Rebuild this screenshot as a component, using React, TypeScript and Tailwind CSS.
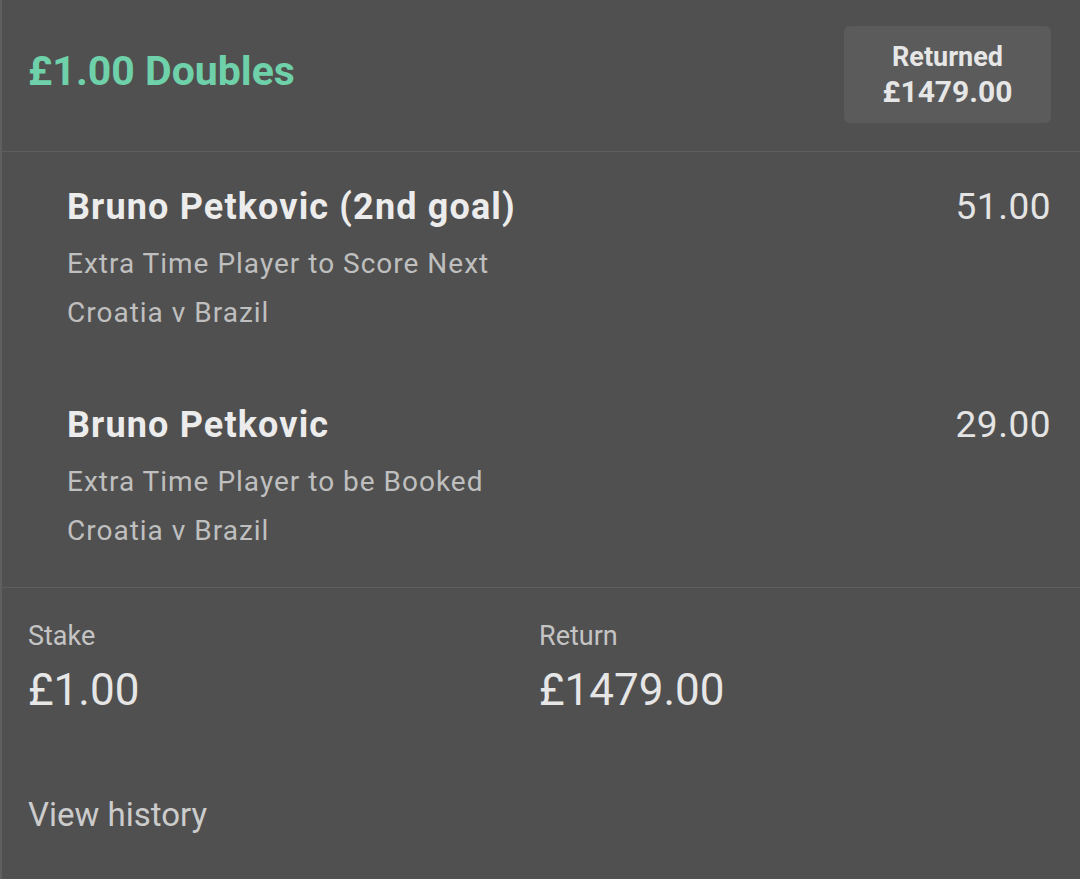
const selections = [
  {
    name: "Bruno Petkovic (2nd goal)",
    market: "Extra Time Player to Score Next",
    event: "Croatia v Brazil",
    odds: "51.00",
  },
  {
    name: "Bruno Petkovic",
    market: "Extra Time Player to be Booked",
    event: "Croatia v Brazil",
    odds: "29.00",
  },
];

export default function App() {
  return (
    <div
      className="min-h-[879px] w-[1080px] bg-[#505050] border-l-2 border-[#5f5f5f]"
      style={{ fontFamily: "Roboto, 'Noto Sans', sans-serif" }}
    >
      {/* Header */}
      <div className="flex h-[152px] items-start justify-between border-b border-[#5e5e5e] pl-[26px] pr-[29px] pt-[26px]">
        <h1 className="mt-[25px] text-[41px] font-bold leading-none text-[#6fd1a9]">£1.00 Doubles</h1>
        <div className="flex h-[97px] w-[207px] flex-col items-center justify-center rounded-md bg-[#5b5b5b] text-[#e6e6e6]">
          <span className="text-[27px] font-bold leading-[34px]">Returned</span>
          <span className="text-[30px] font-bold leading-[36px]">£1479.00</span>
        </div>
      </div>

      {/* Selections */}
      <div className="flex flex-col gap-[66px] border-b border-[#5e5e5e] pb-[32px] pl-[65px] pr-[29px] pt-[33px]">
        {selections.map((s) => (
          <div key={s.name} className="flex items-start justify-between">
            <div className="flex flex-col">
              <span className="mb-[10px] text-[36px] font-bold leading-[44px] tracking-[1.15px] text-[#ececec]">
                {s.name}
              </span>
              <span className="text-[28px] leading-[49px] tracking-[1px] text-[#bfbfbf]">{s.market}</span>
              <span className="text-[28px] leading-[49px] tracking-[1px] text-[#bfbfbf]">{s.event}</span>
            </div>
            <span className="text-[37px] leading-[44px] tracking-[0.5px] text-[#e4e4e4]">{s.odds}</span>
          </div>
        ))}
      </div>

      {/* Stake / return */}
      <div className="px-[26px] pt-[32px]">
        <div className="grid grid-cols-2">
          <div className="flex flex-col gap-[12px]">
            <span className="text-[27px] leading-[32px] text-[#c4c4c4]">Stake</span>
            <span className="text-[44px] leading-[52px] text-[#e6e6e6]">£1.00</span>
          </div>
          <div className="flex flex-col gap-[12px] -ml-[2px]">
            <span className="text-[27px] leading-[32px] text-[#c4c4c4]">Return</span>
            <span className="text-[44px] leading-[52px] text-[#e6e6e6]">£1479.00</span>
          </div>
        </div>
        <div className="mt-[79px] text-[33px] leading-[40px] text-[#cccccc]">View history</div>
      </div>
    </div>
  );
}
